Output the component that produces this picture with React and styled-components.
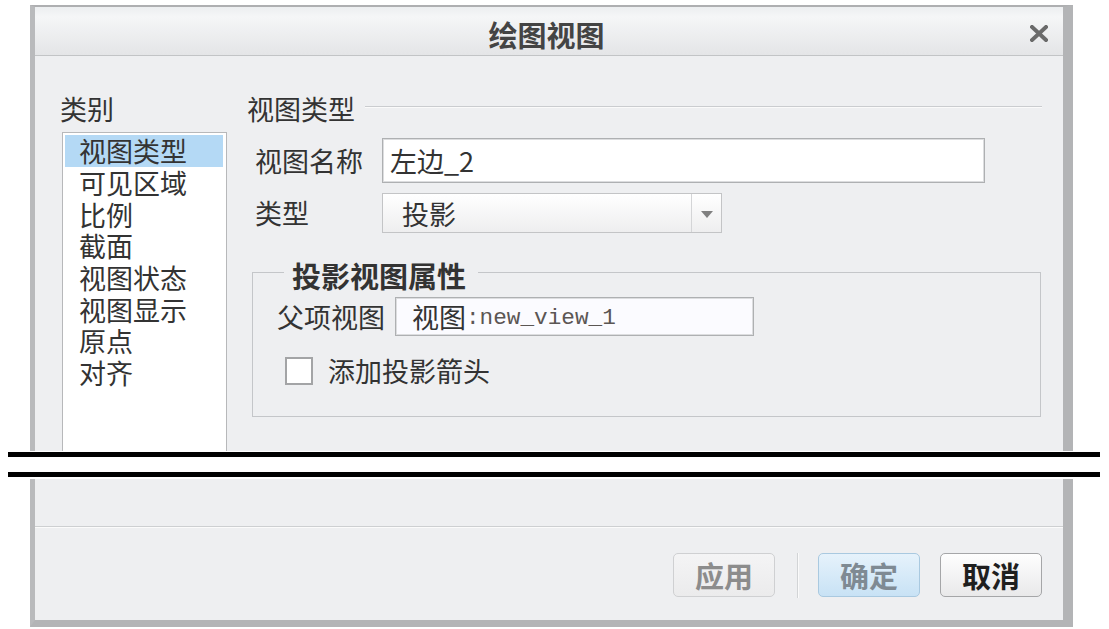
import React from 'react';
import styled, { createGlobalStyle } from 'styled-components';

const CJK = `"Noto Sans CJK SC", "Noto Sans", sans-serif`;

const GlobalStyle = createGlobalStyle`
  html, body { margin: 0; padding: 0; background: #ffffff; }
  body {
    font-family: ${CJK};
    width: 1109px;
    height: 629px;
    overflow: hidden;
    color: #333333;
  }
  * { box-sizing: border-box; }
`;

const Page = styled.div`
  display: flex;
  flex-direction: column;
  padding-top: 5px;
`;

const DialogPart = styled.div`
  margin-left: 30px;
  width: 1043px;
  background: #eeeff1;
  border-left: 5px solid #b9babc;
  border-right: 10px solid #b3b4b6;
  ${p => (p.$top ? 'border-top: 2px solid #aeafb1;' : 'border-bottom: 7px solid #b3b4b6;')}
  display: flex;
  flex-direction: column;
`;

const TitleBar = styled.div`
  height: 49px;
  display: grid;
  grid-template-columns: 1fr auto 1fr;
  align-items: center;
  padding-top: 6px;
  padding-right: 5px;
  background: linear-gradient(#eceef0 0%, #f5f6f7 20%, #e4e5e7 100%);
  border-bottom: 1px solid #c2c4c6;
`;

const Title = styled.div`
  grid-column: 2;
  font-size: 29px;
  font-weight: 700;
  line-height: 32px;
  color: #444;
`;

const CloseBtn = styled.div`
  grid-column: 3;
  justify-self: end;
  margin-right: 10px;
  margin-top: -1px;
  display: flex;
`;

const Body = styled.div`
  height: 395px;
  padding: 36.5px 21px 0 25px;
  display: grid;
  grid-template-columns: 167px 795px;
  column-gap: 20px;
  overflow: hidden;
`;

const LeftCol = styled.div`
  display: flex;
  flex-direction: column;
`;

const Caption = styled.div`
  font-size: 27px;
  line-height: 32px;
  white-space: nowrap;
`;

const ListBox = styled.div`
  margin-top: 7.5px;
  margin-left: 2px;
  width: 165px;
  flex: 1;
  background: #ffffff;
  border: 1px solid #b7b8ba;
  border-bottom: none;
  padding: 2px 3px 0 2px;
`;

const ListItem = styled.div`
  height: ${p => (p.$first ? '32px' : '31.7px')};
  line-height: ${p => (p.$first ? '32px' : '31.7px')};
  padding-left: 14px;
  font-size: 27px;
  white-space: nowrap;
  background: ${p => (p.$selected ? '#b4d9f5' : 'transparent')};
  color: #333333;
`;

const RightCol = styled.div`
  display: flex;
  flex-direction: column;
`;

const SectionHeader = styled.div`
  display: flex;
  align-items: center;
`;

const HeaderRule = styled.div`
  flex: 1;
  height: 1px;
  margin-left: 10px;
  margin-bottom: 4px;
  background: #cacccf;
  box-shadow: 0 1px 0 #fafafa;
`;

const FormRow = styled.div`
  display: flex;
  align-items: center;
  margin-top: ${p => p.$mt || 0}px;
  padding-left: ${p => p.$pl || 0}px;
`;

const FieldLabel = styled.div`
  width: ${p => p.$w}px;
  font-size: 27px;
  line-height: 32px;
  white-space: nowrap;
`;

const TextInput = styled.div`
  width: ${p => p.$w}px;
  height: ${p => p.$h}px;
  background: ${p => p.$bg || '#ffffff'};
  border: 1px solid #aeb0b2;
  box-shadow: inset 0 0 0 1px #dcdddf;
  display: flex;
  align-items: center;
  padding-left: ${p => p.$pl || 7}px;
  font-size: 27px;
  white-space: nowrap;
  color: #333;
`;

const Mono = styled.span`
  font-family: "Liberation Mono", "DejaVu Sans Mono", monospace;
  font-size: 22.7px;
  color: #5b5654;
  margin-top: 2px;
`;

const Dropdown = styled.div`
  width: 340px;
  height: 40px;
  display: flex;
  border: 1px solid #c3c4c6;
  background: linear-gradient(#ffffff, #eeeeef);
`;

const DropdownText = styled.div`
  flex: 1;
  padding-left: 19px;
  display: flex;
  align-items: center;
  font-size: 27px;
  color: #333;
`;

const DropdownArrow = styled.div`
  width: 30px;
  border-left: 1px solid #d4d5d7;
  display: flex;
  align-items: center;
  justify-content: center;
  &::after {
    content: '';
    width: 0;
    height: 0;
    border-left: 6px solid transparent;
    border-right: 6px solid transparent;
    border-top: 7px solid #808080;
    margin-top: 3px;
  }
`;

const GroupBox = styled.fieldset`
  margin: 20.5px 0 0 5px;
  width: 789px;
  padding: 0 0 29px 24px;
  border: 1px solid #c4c6c9;
  min-inline-size: 0;
`;

const GroupTitle = styled.legend`
  margin-left: 7px;
  padding: 5px 12px 0 8px;
  font-size: 29px;
  font-weight: 700;
  line-height: 32px;
  color: #333;
`;

const CheckRow = styled.div`
  display: flex;
  align-items: center;
  gap: 15px;
  margin-top: 19px;
  margin-left: 8px;
`;

const CheckBox = styled.div`
  width: 28px;
  height: 28px;
  background: #ffffff;
  border: 2px solid #a3a4a6;
`;

const CheckLabel = styled.div`
  font-size: 27px;
  line-height: 32px;
  color: #333;
`;

const BreakBand = styled.div`
  margin: 1px 0 2px 8px;
  width: 1092px;
  height: 25px;
  background: #ffffff;
  border-top: 5px solid #000;
  border-bottom: 5px solid #000;
`;

const BottomFill = styled.div`
  height: 48px;
  border-bottom: 1px solid #cdcfd1;
  box-shadow: 0 1px 0 #fbfbfb;
`;

const ButtonBar = styled.div`
  height: 93px;
  display: flex;
  justify-content: flex-end;
  align-items: center;
  gap: 20px;
  padding: 3px 21px 0 0;
`;

const Divider = styled.div`
  width: 1px;
  height: 45px;
  margin-left: 2px;
  background: #d2d4d6;
  box-shadow: 1px 0 0 #fafafa;
`;

const variants = {
  disabled: {
    bg: 'linear-gradient(#f4f4f5, #ebebec)',
    border: '#cfd0d2',
    color: '#8c8c8c',
  },
  primary: {
    bg: 'linear-gradient(#e6f2fb, #c8e2f5)',
    border: '#a9c9e0',
    color: '#7f8a93',
  },
  normal: {
    bg: 'linear-gradient(#fefefe, #e9e9ea)',
    border: '#a5a6a8',
    color: '#1f1f1f',
  },
};

const Button = styled.div`
  width: 102px;
  height: 44px;
  border-radius: 5px;
  border: 1px solid ${p => variants[p.$variant].border};
  background: ${p => variants[p.$variant].bg};
  color: ${p => variants[p.$variant].color};
  font-size: 29px;
  font-weight: 700;
  display: flex;
  align-items: center;
  justify-content: center;
  line-height: 1;
`;

const items = ['视图类型', '可见区域', '比例', '截面', '视图状态', '视图显示', '原点', '对齐'];

export default function App() {
  return (
    <>
      <GlobalStyle />
      <Page>
        <DialogPart $top>
          <TitleBar>
            <Title>绘图视图</Title>
            <CloseBtn>
              <svg width="18" height="17" viewBox="0 0 18 17">
                <path d="M2 2 L16 15 M16 2 L2 15" stroke="#6a6a6a" strokeWidth="4" strokeLinecap="square" />
              </svg>
            </CloseBtn>
          </TitleBar>
          <Body>
            <LeftCol>
              <Caption>类别</Caption>
              <ListBox>
                {items.map((it, i) => (
                  <ListItem key={it} $selected={i === 0} $first={i === 0}>
                    {it}
                  </ListItem>
                ))}
              </ListBox>
            </LeftCol>
            <RightCol>
              <SectionHeader>
                <Caption>视图类型</Caption>
                <HeaderRule />
              </SectionHeader>
              <FormRow $mt={13.5} $pl={8}>
                <FieldLabel $w={127}>视图名称</FieldLabel>
                <TextInput $w={603} $h={45}>左边_2</TextInput>
              </FormRow>
              <FormRow $mt={10} $pl={8}>
                <FieldLabel $w={127}>类型</FieldLabel>
                <Dropdown>
                  <DropdownText>投影</DropdownText>
                  <DropdownArrow />
                </Dropdown>
              </FormRow>
              <GroupBox>
                <GroupTitle>投影视图属性</GroupTitle>
                <FormRow $mt={6.5}>
                  <FieldLabel $w={118}>父项视图</FieldLabel>
                  <TextInput $w={359} $h={39} $bg="#fbfbff" $pl={16}>
                    视图<Mono>:new_view_1</Mono>
                  </TextInput>
                </FormRow>
                <CheckRow>
                  <CheckBox />
                  <CheckLabel>添加投影箭头</CheckLabel>
                </CheckRow>
              </GroupBox>
            </RightCol>
          </Body>
        </DialogPart>
        <BreakBand />
        <DialogPart>
          <BottomFill />
          <ButtonBar>
            <Button $variant="disabled">应用</Button>
            <Divider />
            <Button $variant="primary">确定</Button>
            <Button $variant="normal">取消</Button>
          </ButtonBar>
        </DialogPart>
      </Page>
    </>
  );
}
